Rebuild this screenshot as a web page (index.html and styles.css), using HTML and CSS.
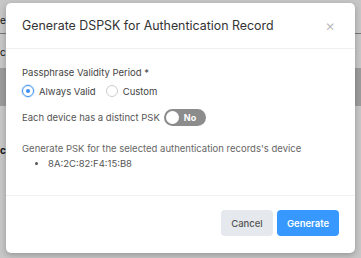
FILE: index.html
```html
<!DOCTYPE html>
<html lang="en">
<head>
  <meta charset="UTF-8" />
  <title>Generate DSPSK</title>
  <link rel="stylesheet" href="styles.css">
</head>
<body>

  <div class="page">
    <div class="page-head">e</div>
    <div class="page-row">co</div>
    <div class="page-band"></div>
    <div class="page-row bold">c</div>
  </div>

  <div class="overlay"></div>

  <div class="modal">
    <div class="modal-header">
      <span class="modal-title">Generate DSPSK for Authentication Record</span>
      <span class="close">&times;</span>
    </div>

    <div class="modal-body">
      <div class="field-label">Passphrase Validity Period *</div>
      <div class="radio-group">
        <label class="radio checked"><span class="circle"></span>Always Valid</label>
        <label class="radio"><span class="circle"></span>Custom</label>
      </div>

      <div class="toggle-row">
        <span>Each device has a distinct PSK</span>
        <span class="toggle"><span class="knob"></span>No</span>
      </div>

      <div class="psk-info">Generate PSK for the selected authentication records's device</div>
      <ul class="device-list">
        <li>8A:2C:82:F4:15:B8</li>
      </ul>
    </div>

    <div class="modal-footer">
      <button class="btn btn-cancel">Cancel</button>
      <button class="btn btn-primary">Generate</button>
    </div>
  </div>

</body>
</html>
```

FILE: styles.css
```css
body {
  margin: 0;
  font-family: Inter, "Noto Sans", sans-serif;
  background-color: #fff;
  width: 361px;
  height: 258px;
  overflow: hidden;
  position: relative;
}
.page {
  padding-top: 14px;
  font-size: 10px;
  color: #222;
}
.page-head {
  height: 19px;
  border-bottom: 1px solid #999;
}
.page-row {
  padding: 12px 0 0 0;
  height: 14px;
}
.page-row.bold {
  font-weight: bold;
  padding-top: 38px;
}
.page-band {
  height: 38px;
  margin-top: 8px;
  background-color: #c8c8c8;
}
.overlay {
  position: absolute;
  inset: 0;
  background-color: rgba(0, 0, 0, 0.22);
}
.modal {
  position: absolute;
  left: 6px;
  top: 3px;
  width: 349px;
  height: 250px;
  background-color: #fff;
  border-radius: 5px;
  box-shadow: 0 2px 6px rgba(0, 0, 0, 0.25);
  display: flex;
  flex-direction: column;
}
.modal-header {
  height: 45px;
  padding: 0 20px 0 16px;
  display: flex;
  align-items: center;
  justify-content: space-between;
  border-bottom: 1px solid #f0f0f0;
}
.modal-title {
  font-size: 12.4px;
  color: #333;
}
.close {
  font-size: 15px;
  color: #b0b0b0;
  font-weight: 300;
}
.modal-body {
  flex: 1;
  padding: 18px 16px 0 16px;
  font-size: 9.5px;
  color: #555;
}
.field-label {
  color: #444;
}
.radio-group {
  display: flex;
  gap: 10px;
  margin-top: 7px;
}
.radio {
  display: flex;
  align-items: center;
  gap: 5px;
  color: #444;
}
.circle {
  width: 10px;
  height: 10px;
  border: 1px solid #ccc;
  border-radius: 50%;
  display: flex;
  align-items: center;
  justify-content: center;
}
.radio.checked .circle {
  border-color: #3b8ff0;
  box-shadow: 0 0 0 1px rgba(59, 143, 240, 0.2);
}
.radio.checked .circle::after {
  content: "";
  width: 4px;
  height: 4px;
  border-radius: 50%;
  background-color: #3b8ff0;
}
.toggle-row {
  display: flex;
  align-items: center;
  gap: 4px;
  margin-top: 12px;
}
.toggle {
  width: 42px;
  height: 17px;
  border-radius: 9px;
  background-color: #8c8c8c;
  color: #fff;
  font-weight: bold;
  font-size: 9px;
  display: flex;
  align-items: center;
  gap: 5px;
  box-sizing: border-box;
  padding-left: 2px;
}
.knob {
  width: 13px;
  height: 13px;
  border-radius: 50%;
  background-color: #fff;
}
.psk-info {
  margin-top: 17px;
  color: #666;
}
.device-list {
  margin: 4px 0 0 0;
  padding-left: 26px;
  color: #555;
}
.modal-footer {
  height: 58px;
  border-top: 1px solid #f0f0f0;
  display: flex;
  align-items: center;
  justify-content: flex-end;
  gap: 4px;
  padding: 0 16px 3px 16px;
  box-sizing: border-box;
}
.btn {
  height: 26px;
  border: none;
  border-radius: 4px;
  font-family: inherit;
  font-size: 9.5px;
}
.btn-cancel {
  width: 52px;
  background-color: #e5e8ec;
  color: #555;
  font-weight: 500;
}
.btn-primary {
  width: 62px;
  background-color: #3799ff;
  color: #fff;
  font-weight: 600;
}
```
